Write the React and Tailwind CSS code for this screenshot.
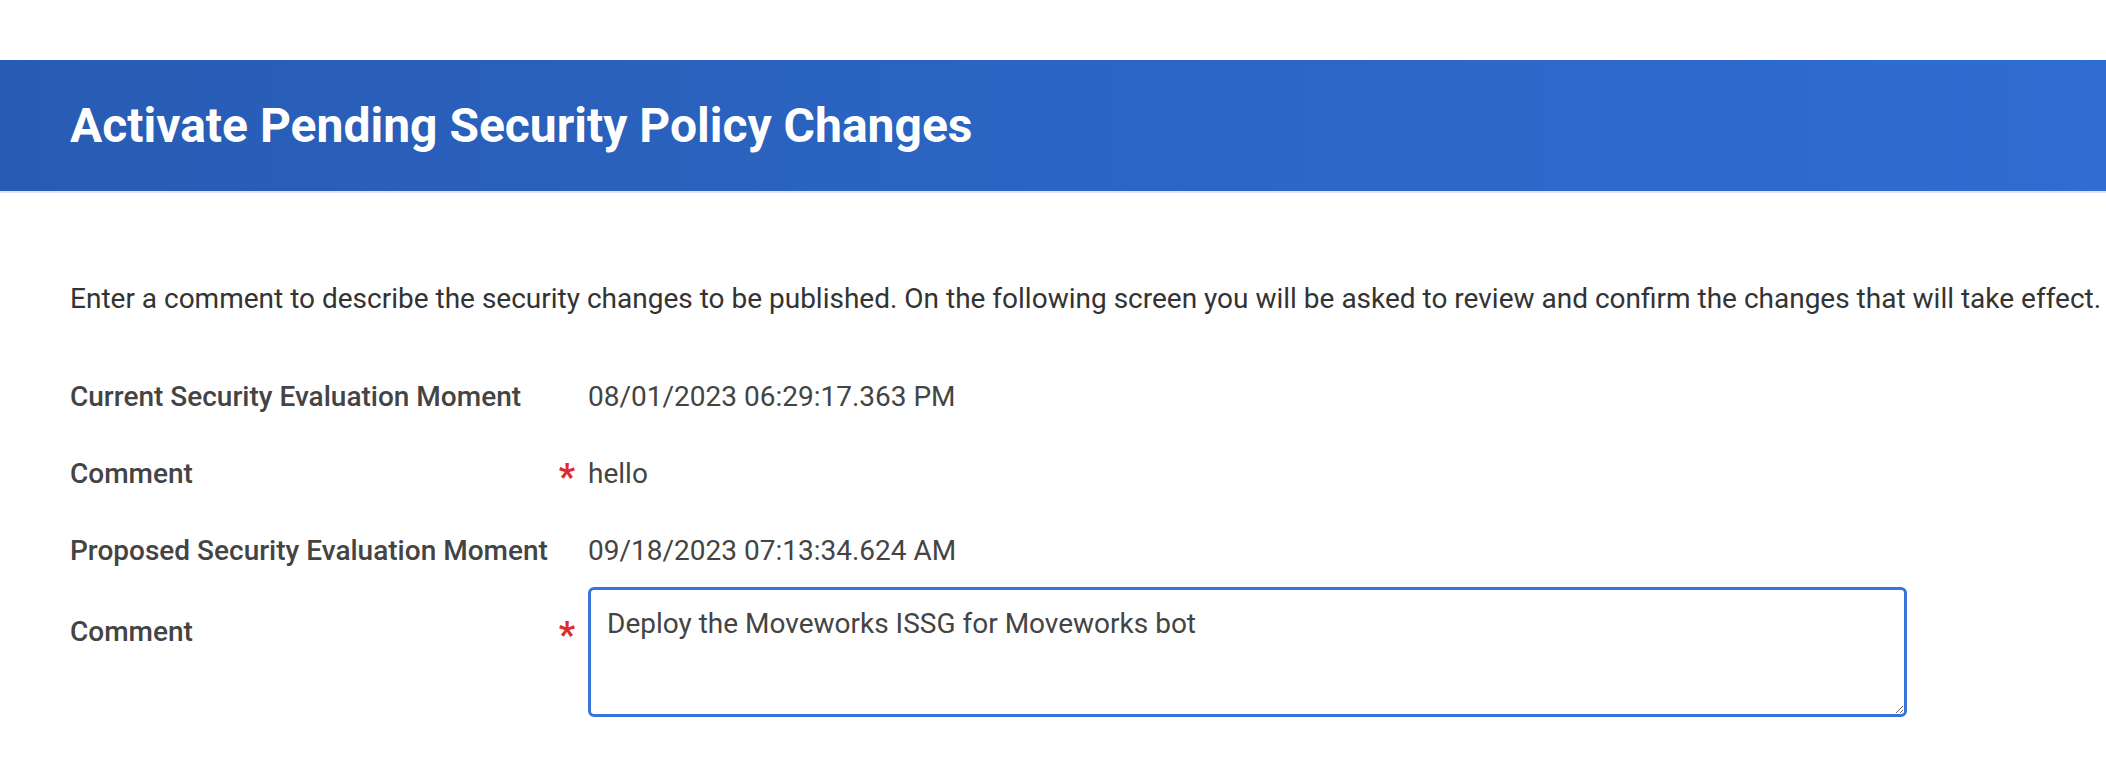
export default function App() {
  const rows = [
    { label: 'Current Security Evaluation Moment', value: '08/01/2023 06:29:17.363 PM' },
    { label: 'Comment', value: 'hello', required: true },
    { label: 'Proposed Security Evaluation Moment', value: '09/18/2023 07:13:34.624 AM' },
  ];

  return (
    <div className="min-h-screen bg-white pt-[60px] text-[#444444]" style={{ fontFamily: 'Roboto, "Liberation Sans", sans-serif' }}>
      {/* page header */}
      <div className="h-[131px] bg-gradient-to-r from-[#285cb4] to-[#2f6dd2] flex items-center px-[70px]">
        <h1 className="text-white font-bold text-[48px] leading-none">Activate Pending Security Policy Changes</h1>
      </div>
      <div className="h-[2px] bg-[#dfe5ee]" />

      <p className="px-[70px] mt-[90px] text-[28px] leading-[32px] text-[#333333] whitespace-nowrap">
        Enter a comment to describe the security changes to be published. On the following screen you will be asked to review and confirm the changes that will take effect.
      </p>

      <div className="px-[70px] mt-[43px] flex flex-col">
        {rows.map((row) => (
          <div key={row.label + row.value} className="flex items-center h-[77px]">
            <div className="w-[518px] flex items-center justify-between pr-[13px]">
              <span className="text-[28px] font-medium">{row.label}</span>
              {row.required && <span className="text-[#de2c2c] text-[36px] font-bold leading-none mt-[6px]">*</span>}
            </div>
            <span className="text-[28px]">{row.value}</span>
          </div>
        ))}

        <div className="flex items-start -mt-[2px]">
          <div className="w-[518px] flex items-center justify-between pr-[13px] pt-[24px]">
            <span className="text-[28px] font-medium">Comment</span>
            <span className="text-[#de2c2c] text-[36px] font-bold leading-none mt-[6px]">*</span>
          </div>
          <textarea
            defaultValue="Deploy the Moveworks ISSG for Moveworks bot"
            className="w-[1319px] h-[130px] border-[3px] border-[#3874d9] rounded-[6px] px-[16px] pt-[17px] pb-[10px] text-[28px] leading-[34px] text-[#444444] outline-none"
          />
        </div>
      </div>
    </div>
  );
}
